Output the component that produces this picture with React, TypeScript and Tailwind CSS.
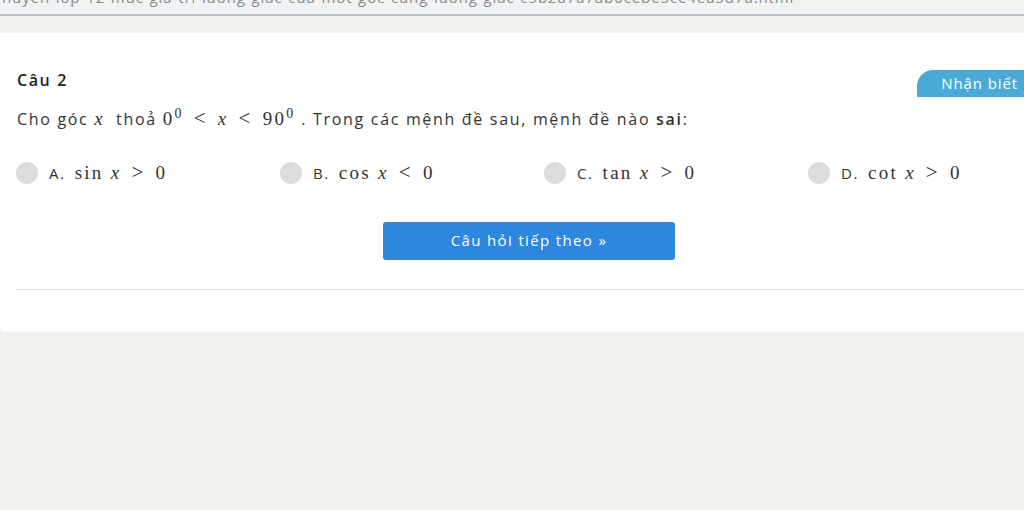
export default function App() {
  const options = [
    { key: "A.", fn: "sin", op: ">" },
    { key: "B.", fn: "cos", op: "<" },
    { key: "C.", fn: "tan", op: ">" },
    { key: "D.", fn: "cot", op: ">" },
  ]
  return (
    <div className="h-[510px] w-[1024px] overflow-hidden bg-[#f2f1ed] font-['Open_Sans',sans-serif] tracking-[0.1em] text-[#333]">
      {/* url strip, cut off at top */}
      <div className="h-[14px] overflow-hidden bg-[#f1f2f4]">
        <div className="-mt-[12px] whitespace-nowrap pl-[2px] text-[15px] leading-[18px] tracking-[0.06em] text-[#8a8a8a]">
          huyen-lop-12-muc-gia-tri-luong-giac-cua-mot-goc-cung-luong-giac-c5b2a7a7ab0cebe5ce4ea5d7a.html
        </div>
      </div>
      <div className="h-[2px] bg-[#b7bdca]" />

      <div className="pt-[17px]">
        <div className="relative w-[1058px] rounded-bl-[6px] bg-white px-4 pb-[42px] pt-[38px]">
          {/* badge */}
          <span className="absolute right-4 top-[37px] rounded-tl-[16px] bg-[#4ba9d6] pb-[4px] pl-[24px] pr-[24px] pt-[3px] text-[15px] leading-[20px] tracking-[0.06em] text-white">
            Nhận biết
          </span>

          <h3 className="pl-px text-[16px] font-semibold leading-[18px] text-[#222]">Câu 2</h3>

          <p className="mt-[17px] flex items-baseline pl-px text-[16px] leading-[24px] tracking-[0.105em]">
            <span>Cho góc&nbsp;</span>
            <span className="font-['Liberation_Serif',serif] text-[19px] italic">x</span>
            <span>&nbsp;&nbsp;thoả&nbsp;</span>
            <span className="font-['Liberation_Serif',serif] text-[19px] tracking-[0.12em]">
              0<sup className="text-[14px]">0</sup>
              <span className="mx-[10px] text-[21px]">&lt;</span>
              <span className="italic">x</span>
              <span className="mx-[10px] text-[21px]">&lt;</span>
              90<sup className="text-[14px]">0</sup>
            </span>
            <span>&nbsp;. Trong các mệnh đề sau, mệnh đề nào&nbsp;</span>
            <b className="font-semibold">sai</b>
            <span>:</span>
          </p>

          <div className="mt-[26px] grid grid-cols-[264px_264px_264px_264px]">
            {options.map((o) => (
              <div key={o.key} className="flex items-center">
                <span className="h-[22px] w-[22px] rounded-full bg-[#dcdcdc]" />
                <span className="ml-[11px] text-[15px]">{o.key}</span>
                <span className="ml-[9px] font-['Liberation_Serif',serif] text-[19px] tracking-[0.12em]">
                  {o.fn} <span className="italic">x</span>
                  <span className="mx-[10px] text-[21px]">{o.op}</span>0
                </span>
              </div>
            ))}
          </div>

          <div className="mt-[33px] flex justify-center">
            <button className="h-[38px] w-[292px] rounded-[3px] bg-[#2d87de] text-[15px] font-normal tracking-[0.09em] text-white">
              Câu hỏi tiếp theo »
            </button>
          </div>

          <div className="mt-[29px] border-t border-[#dedede]" />
        </div>
      </div>
    </div>
  )
}
